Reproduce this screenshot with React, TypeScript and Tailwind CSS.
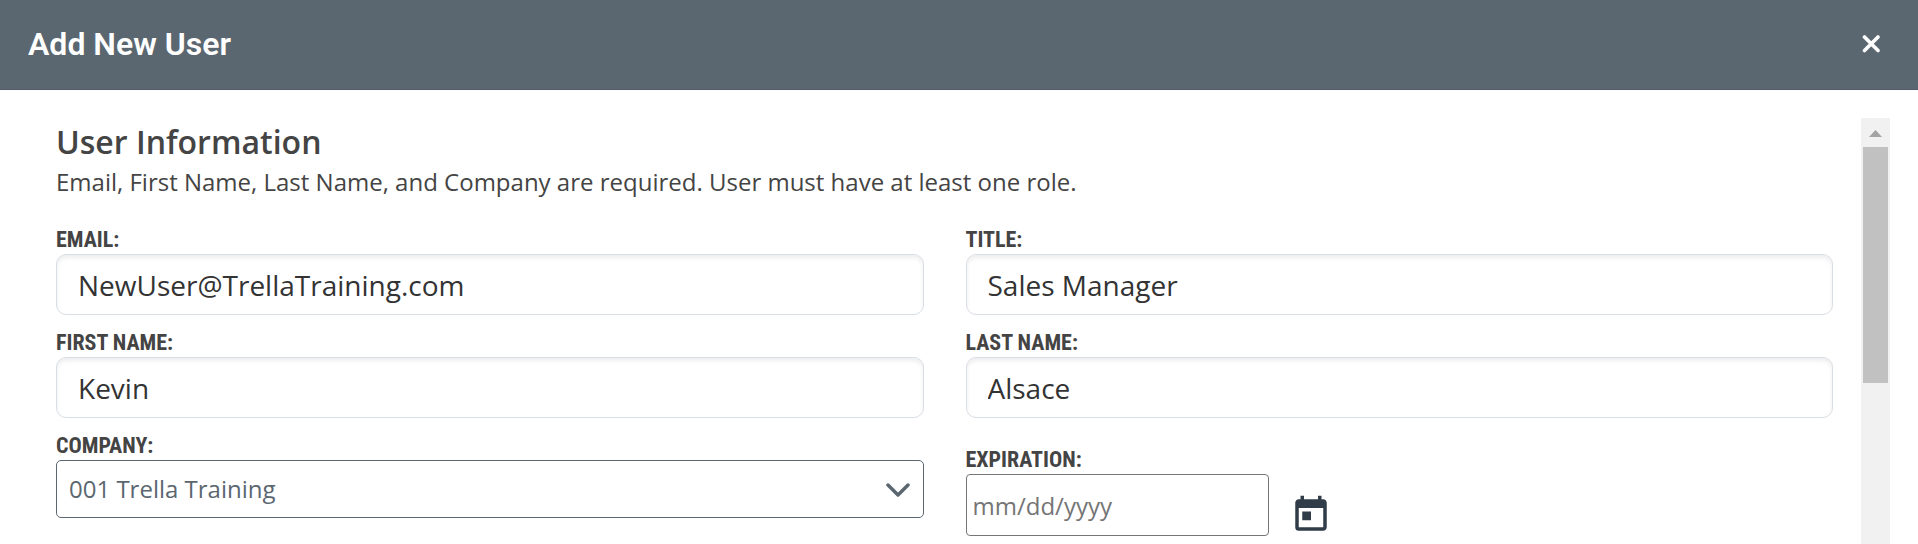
import { useState } from "react";
import { MdToday } from "react-icons/md";

const labelClass =
  "block pt-0.5 font-['Roboto_Condensed','Roboto',sans-serif] text-[22px] leading-7 font-bold uppercase text-[#444444]";
const inputClass =
  "block w-full h-[61px] px-[21px] rounded-[10px] border border-[#d9dee5] bg-white text-[28px] text-[#333333] shadow-[inset_0_3px_4px_rgba(0,0,0,0.07)] outline-none focus:border-[#5b6770]";

function TextField({
  id,
  label,
  type = "text",
  value,
  onChange,
}: {
  id: string;
  label: string;
  type?: string;
  value: string;
  onChange: (val: string) => void;
}) {
  return (
    <div>
      <label htmlFor={id} className={labelClass}>
        {label}
      </label>
      <input
        id={id}
        type={type}
        className={inputClass}
        value={value}
        onChange={(e) => onChange(e.target.value)}
      />
    </div>
  );
}

export default function App() {
  const [formData, setFormData] = useState({
    email: "NewUser@TrellaTraining.com",
    title: "Sales Manager",
    firstName: "Kevin",
    lastName: "Alsace",
    company: "001",
    expiration: "",
  });

  return (
    <div className="flex min-h-screen flex-col bg-white font-['Open_Sans',sans-serif] text-[#444444]">
      <header className="flex h-[90px] items-center justify-between border-b border-[#55596a] bg-[#5b6770] px-7 pb-0.5">
        <h1 className="font-['Roboto',sans-serif] text-[32px] leading-10 font-semibold text-white">
          Add New User
        </h1>
        <button type="button" aria-label="Close" className="p-2.5 text-white">
          <svg viewBox="0 0 18 18" className="h-[18px] w-[18px]">
            <path
              d="M2.5 2L16 15.5M16 2L2.5 15.5"
              stroke="currentColor"
              strokeWidth="3.6"
              strokeLinecap="round"
            />
          </svg>
        </button>
      </header>

      <main className="flex flex-1 px-7 pt-7">
        <form className="flex-1 px-7">
          <h2 className="pt-1 text-[32px] leading-10 font-semibold">
            User Information
          </h2>
          <p className="text-[24px] leading-10">
            Email, First Name, Last Name, and Company are required. User must
            have at least one role.
          </p>

          <div className="mt-[22px] grid grid-cols-2 gap-x-[42px] gap-y-3">
            <TextField
              id="email"
              label="Email:"
              type="email"
              value={formData.email}
              onChange={(val) => setFormData({ ...formData, email: val })}
            />
            <TextField
              id="title"
              label="Title:"
              value={formData.title}
              onChange={(val) => setFormData({ ...formData, title: val })}
            />
            <TextField
              id="firstName"
              label="First Name:"
              value={formData.firstName}
              onChange={(val) => setFormData({ ...formData, firstName: val })}
            />
            <TextField
              id="lastName"
              label="Last Name:"
              value={formData.lastName}
              onChange={(val) => setFormData({ ...formData, lastName: val })}
            />

            <div>
              <label htmlFor="company" className={labelClass}>
                Company:
              </label>
              <div className="relative">
                <select
                  id="company"
                  className="block h-[58px] w-full appearance-none rounded-[5px] border border-[#5b6770] bg-white px-3 text-[24px] text-[#5b6770] outline-none"
                  value={formData.company}
                  onChange={(e) =>
                    setFormData({ ...formData, company: e.target.value })
                  }
                >
                  <option value="001">001 Trella Training</option>
                </select>
                <svg
                  viewBox="0 0 24 14"
                  fill="none"
                  className="pointer-events-none absolute top-[23px] right-3.5 h-3.5 w-6 text-[#5b6770]"
                >
                  <path
                    d="M2 2L12 12L22 2"
                    stroke="currentColor"
                    strokeWidth="3.5"
                    strokeLinecap="round"
                    strokeLinejoin="round"
                  />
                </svg>
              </div>
            </div>

            <div className="pt-3.5">
              <label htmlFor="expiration" className={labelClass}>
                Expiration:
              </label>
              <div className="flex items-end gap-[21px]">
                <input
                  id="expiration"
                  type="text"
                  placeholder="mm/dd/yyyy"
                  className="block h-[62px] w-[303px] rounded-[4px] border border-[#767676] bg-white px-1.5 text-[24px] outline-none placeholder:text-[#757575]"
                  value={formData.expiration}
                  onChange={(e) =>
                    setFormData({ ...formData, expiration: e.target.value })
                  }
                />
                <button
                  type="button"
                  aria-label="Pick a date"
                  className="text-[#303c48]"
                >
                  <MdToday size={42} />
                </button>
              </div>
            </div>
          </div>
        </form>

        {/* scroll bar */}
        <div className="flex w-[29px] flex-col items-center bg-[#f1f1f1]">
          <div className="flex h-[29px] items-end justify-center pb-2.5">
            <svg viewBox="0 0 13 7" className="h-[7px] w-[13px]">
              <path d="M6.5 0L13 7H0Z" fill="#a3a3a3" />
            </svg>
          </div>
          <div className="h-[236px] w-[25px] bg-[#c1c1c1]" />
        </div>
      </main>
    </div>
  );
}
